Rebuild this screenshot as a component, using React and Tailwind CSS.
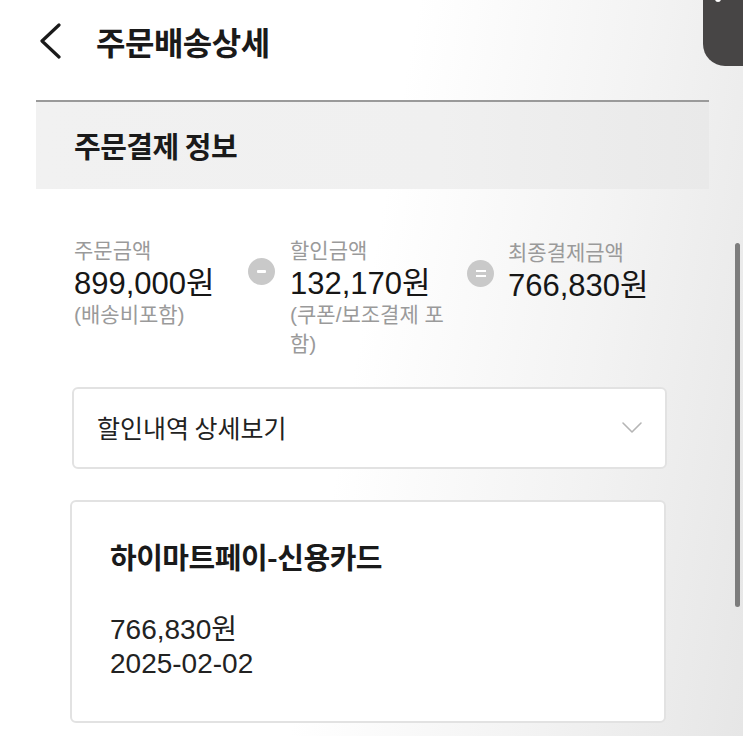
import React from 'react';

const font = "font-['Liberation_Sans','Noto_Sans_CJK_KR',sans-serif]";

const Circle = ({ sign }) => (
  <div className="w-[27px] h-[27px] rounded-full bg-[#c9c9c9] flex items-center justify-center shrink-0">
    {sign === 'minus' ? (
      <div className="w-[9px] h-[3px] rounded-[1px] bg-white" />
    ) : (
      <div className="flex flex-col gap-[3px]">
        <div className="w-[10px] h-[2px] bg-white" />
        <div className="w-[10px] h-[2px] bg-white" />
      </div>
    )}
  </div>
);

const Amount = ({ label, value, note }) => (
  <div className="flex flex-col">
    <span className="text-[21px] leading-[26px] text-[#9a9a9a]">{label}</span>
    <span className="text-[31px] leading-[40px] text-[#161616]">{value}</span>
    {note && <span className="text-[21px] leading-[29px] text-[#9a9a9a] mt-[-4px]">{note}</span>}
  </div>
);

const App = () => {
  return (
    <div className={`relative w-[743px] h-[736px] overflow-hidden bg-[linear-gradient(100deg,#ffffff_48%,#f3f3f3_75%,#e6e6e6_100%)] ${font}`}>
      {/* header */}
      <div className="flex items-center h-[100px] pl-[38px] pb-[18px]">
        <svg width="24" height="36" viewBox="0 0 24 36" className="shrink-0">
          <path d="M21 2 L4 18 L21 34" fill="none" stroke="#1a1a1a" strokeWidth="3.2" strokeLinecap="round" strokeLinejoin="round" />
        </svg>
        <h1 className="ml-[34px] text-[32px] font-bold text-[#1a1a1a] tracking-[-0.5px] font-['Noto_Sans_CJK_KR',sans-serif]">주문배송상세</h1>
      </div>

      {/* section */}
      <div className="ml-[36px] mr-[34px]">
        <div className="h-[89px] border-t-2 border-[#9a9a9a] bg-[linear-gradient(90deg,#f1f1f1,#f0f0f0_60%,#e9e9e9)] flex items-center pl-[38px]">
          <span className="text-[29px] font-bold text-[#1a1a1a] font-['Noto_Sans_CJK_KR',sans-serif] tracking-[-0.5px]">주문결제 정보</span>
        </div>

        {/* summary */}
        <div className="flex pl-[38px] pt-[49px] h-[198px]">
          <div className="w-[174px]">
            <Amount label="주문금액" value="899,000원" note="(배송비포함)" />
          </div>
          <div className="pt-[20px]"><Circle sign="minus" /></div>
          <div className="w-[160px] ml-[15px] mr-[17px]">
            <Amount label="할인금액" value="132,170원" note="(쿠폰/보조결제 포함)" />
          </div>
          <div className="pt-[22px]"><Circle sign="equal" /></div>
          <div className="ml-[14px] pt-[2px]">
            <Amount label="최종결제금액" value="766,830원" />
          </div>
        </div>

        {/* discount dropdown */}
        <div className="ml-[36px] mr-[42px] h-[82px] rounded-[6px] border-2 border-[#e2e2e2] bg-white flex items-center justify-between pl-[23px] pr-[22px]">
          <span className="text-[25px] text-[#222] font-['Noto_Sans_CJK_KR',sans-serif]">할인내역 상세보기</span>
          <svg width="22" height="14" viewBox="0 0 22 14">
            <path d="M2 2 L11 11 L20 2" fill="none" stroke="#b5b5b5" strokeWidth="1.6" strokeLinecap="round" strokeLinejoin="round" />
          </svg>
        </div>

        {/* payment card */}
        <div className="ml-[34px] mr-[43px] mt-[31px] h-[223px] rounded-[6px] border-2 border-[#e2e2e2] bg-white pl-[38px] pt-[34px]">
          <div className="text-[29px] font-bold text-[#1a1a1a] leading-[40px] font-['Noto_Sans_CJK_KR',sans-serif] tracking-[-0.5px]">하이마트페이-신용카드</div>
          <div className="mt-[37px] text-[28px] leading-[34px] text-[#222]">
            <div>766,830원</div>
            <div>2025-02-02</div>
          </div>
        </div>
      </div>

      {/* scrollbar */}
      <div className="absolute left-[735px] top-[243px] w-[5px] h-[364px] rounded-full bg-[#7d7d7d]" />

      {/* top-right overlay */}
      <div className="absolute left-[703px] top-[-20px] w-[60px] h-[86px] rounded-bl-[22px] bg-[#474545]">
        <div className="absolute left-[12px] top-[16px] w-[6px] h-[6px] rounded-full bg-white" />
      </div>
    </div>
  );
};

export default App;
